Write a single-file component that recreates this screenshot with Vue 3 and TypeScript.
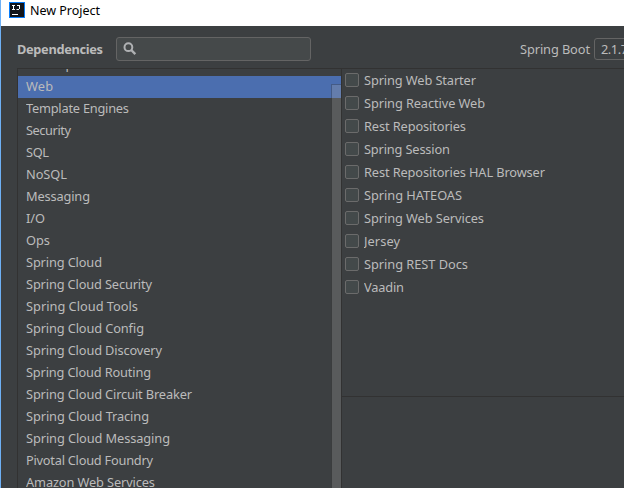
<script setup lang="ts">
interface Entry {
  label: string
  width: number
}

const categories: Entry[] = [
  { label: 'Developer Tools', width: 92 },
  { label: 'Web', width: 27 },
  { label: 'Template Engines', width: 103 },
  { label: 'Security', width: 45 },
  { label: 'SQL', width: 23 },
  { label: 'NoSQL', width: 41 },
  { label: 'Messaging', width: 64 },
  { label: 'I/O', width: 19 },
  { label: 'Ops', width: 24 },
  { label: 'Spring Cloud', width: 76 },
  { label: 'Spring Cloud Security', width: 126 },
  { label: 'Spring Cloud Tools', width: 112 },
  { label: 'Spring Cloud Config', width: 118 },
  { label: 'Spring Cloud Discovery', width: 136 },
  { label: 'Spring Cloud Routing', width: 125 },
  { label: 'Spring Cloud Circuit Breaker', width: 166 },
  { label: 'Spring Cloud Tracing', width: 123 },
  { label: 'Spring Cloud Messaging', width: 144 },
  { label: 'Pivotal Cloud Foundry', width: 127 },
  { label: 'Amazon Web Services', width: 129 },
]

const starters: Entry[] = [
  { label: 'Spring Web Starter', width: 112 },
  { label: 'Spring Reactive Web', width: 121 },
  { label: 'Rest Repositories', width: 102 },
  { label: 'Spring Session', width: 86 },
  { label: 'Rest Repositories HAL Browser', width: 181 },
  { label: 'Spring HATEOAS', width: 98 },
  { label: 'Spring Web Services', width: 120 },
  { label: 'Jersey', width: 36 },
  { label: 'Spring REST Docs', width: 104 },
  { label: 'Vaadin', width: 40 },
]

const selected = 'Web'
</script>

<template>
  <div class="window">
    <header class="titlebar">
      <svg class="logo" viewBox="0 0 16 16">
        <rect width="16" height="16" fill="#087cfa" />
        <rect x="1" y="1" width="14" height="14" fill="#12151b" />
        <path d="M3 3.5h3M4.5 3v5M3 7.5h3M8 3.5h3M10.5 3v4M7.5 7.5h2.5" fill="none" stroke="#fff" stroke-width="1" />
        <path d="M3 12.5h6" stroke="#fff" stroke-width="1" />
      </svg>
      <svg class="title" width="72" height="20"><text x="0" y="14" textLength="70">New Project</text></svg>
    </header>
    <div class="toolbar">
      <svg class="heading" width="88" height="20"><text x="0" y="14" textLength="86">Dependencies</text></svg>
      <div class="search">
        <svg width="14" height="14" viewBox="0 0 14 14">
          <circle cx="5.4" cy="5.2" r="3.9" fill="none" stroke="#afb1b3" stroke-width="2" />
          <path d="M8.2 8 12.3 12.2" stroke="#afb1b3" stroke-width="2.4" />
        </svg>
      </div>
      <svg class="boot" width="72" height="20"><text x="0" y="14" textLength="70">Spring Boot</text></svg>
      <div class="version"><svg width="40" height="20"><text x="0" y="14" textLength="27">2.1.7</text></svg></div>
    </div>
    <main class="panes">
      <div class="left">
        <div class="list">
          <div v-for="c in categories" :key="c.label" class="row" :class="{ active: c.label === selected }">
            <svg width="200" height="22"><text x="0" y="15" :textLength="c.width">{{ c.label }}</text></svg>
          </div>
        </div>
        <div class="thumb"></div>
      </div>
      <div class="right">
        <div class="options">
          <div v-for="s in starters" :key="s.label" class="option">
            <span class="box"></span>
            <svg width="220" height="23"><text x="0" y="16" :textLength="s.width">{{ s.label }}</text></svg>
          </div>
        </div>
        <div class="details"></div>
      </div>
    </main>
  </div>
</template>

<style>
body {
  overflow: hidden;
}
</style>

<style scoped>
.window {
  box-sizing: border-box;
  width: 624px;
  height: 488px;
  overflow: hidden;
  display: flex;
  flex-direction: column;
  border-left: 1px solid #6eb0f5;
  background: #3c3f41;
  font: 12.8px "Noto Sans", "Open Sans", sans-serif;
}
svg {
  display: block;
  flex: none;
}
text {
  fill: #bbbbbb;
}
.titlebar {
  box-sizing: border-box;
  height: 26px;
  flex: none;
  display: flex;
  padding: 2px 0 0 8px;
  background: #fff;
}
.logo {
  width: 16px;
  height: 16px;
}
.title {
  margin: -1px 0 0 5px;
}
.title text {
  fill: #000;
  font-size: 12.5px;
}
.toolbar {
  box-sizing: border-box;
  height: 42px;
  flex: none;
  display: flex;
  align-items: flex-start;
  padding: 11px 0 0 16px;
}
.heading {
  margin-top: 3px;
}
.heading text {
  font-weight: 700;
}
.search {
  box-sizing: border-box;
  width: 195px;
  height: 24px;
  flex: none;
  margin-left: 11px;
  padding: 4px 6px;
  border: 1px solid #646464;
  border-radius: 3px;
  background: #45494a;
}
.boot {
  margin: 3px 0 0 209px;
}
.version {
  box-sizing: border-box;
  width: 60px;
  height: 22px;
  flex: none;
  margin: 1px 0 0 2px;
  padding: 1px 0 0 6px;
  border: 1px solid #646464;
  border-radius: 3px;
}
.panes {
  display: flex;
  height: 420px;
  margin-left: 16px;
}
.left {
  position: relative;
  box-sizing: border-box;
  width: 325px;
  flex: none;
  border: solid #323232;
  border-width: 1px 1px 0 1px;
  overflow: hidden;
}
.list {
  margin-top: -15px;
}
.row {
  height: 22px;
  padding-left: 8px;
}
.active {
  background: #4b6eaf;
}
.thumb {
  position: absolute;
  box-sizing: border-box;
  top: 15px;
  right: 0;
  bottom: -2px;
  width: 10px;
  border: 1px solid rgba(56, 56, 56, 0.35);
  border-right: 0;
  background: rgba(166, 166, 166, 0.28);
  background-clip: padding-box;
}
.right {
  flex: 1;
  display: flex;
  flex-direction: column;
  border-top: 1px solid #323232;
}
.options {
  box-sizing: border-box;
  height: 328px;
  flex: none;
  border-bottom: 1px solid #323232;
}
.option {
  height: 23px;
  display: flex;
  padding: 0 0 0 3px;
}
.box {
  box-sizing: border-box;
  width: 14px;
  height: 14px;
  margin: 4px 5px 0 0;
  border: 1px solid #6b6b6b;
  border-radius: 2px;
  background: #43494a;
}
.details {
  flex: 1;
}
</style>
